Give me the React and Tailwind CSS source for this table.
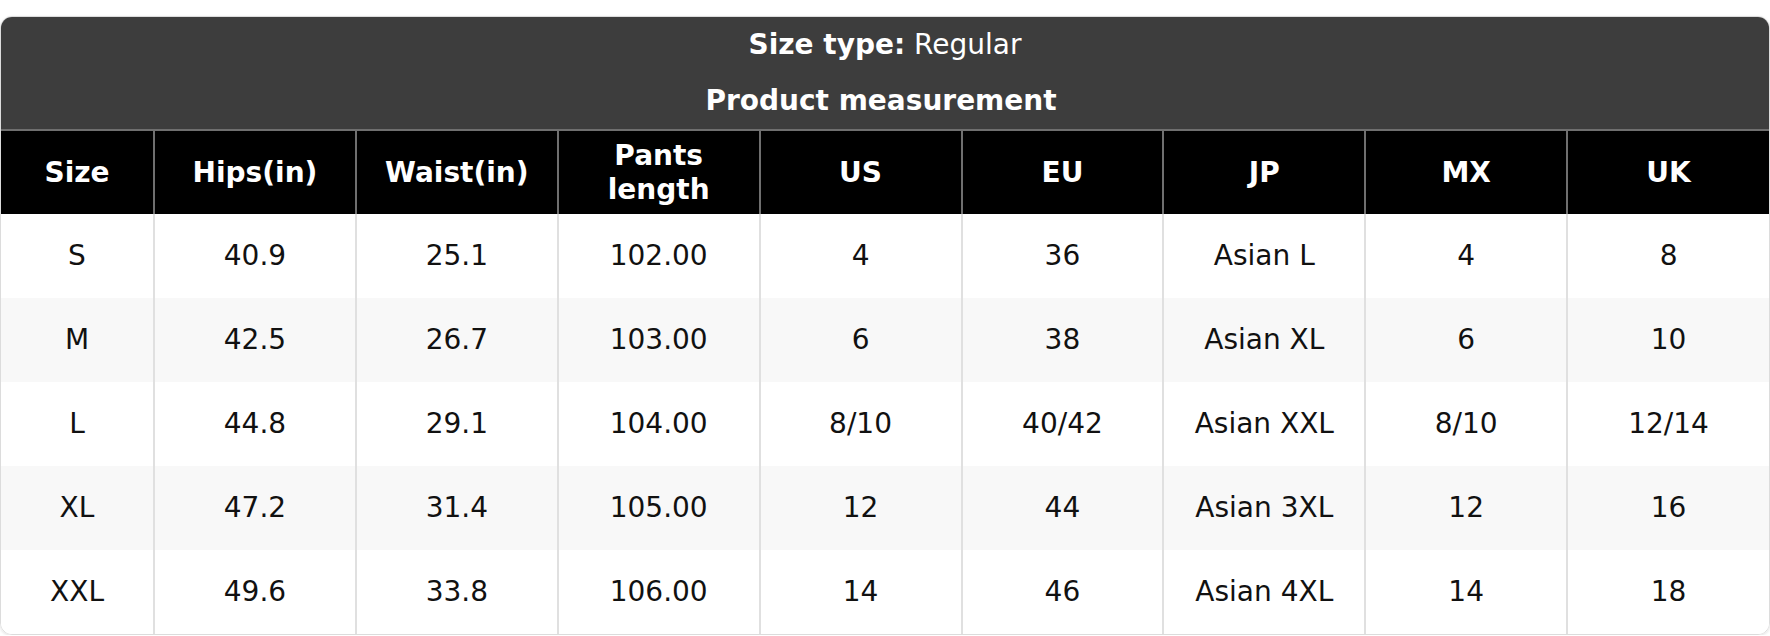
const columns = ['Size', 'Hips(in)', 'Waist(in)', 'Pants length', 'US', 'EU', 'JP', 'MX', 'UK'];

const rows = [
  ['S', '40.9', '25.1', '102.00', '4', '36', 'Asian L', '4', '8'],
  ['M', '42.5', '26.7', '103.00', '6', '38', 'Asian XL', '6', '10'],
  ['L', '44.8', '29.1', '104.00', '8/10', '40/42', 'Asian XXL', '8/10', '12/14'],
  ['XL', '47.2', '31.4', '105.00', '12', '44', 'Asian 3XL', '12', '16'],
  ['XXL', '49.6', '33.8', '106.00', '14', '46', 'Asian 4XL', '14', '18'],
];

const App = () => {
  return (
    <div className="bg-white pt-4 font-['DejaVu_Sans',sans-serif]">
      <div className="overflow-hidden rounded-xl border border-[#dcdcdc] shadow-[0_1px_3px_rgba(0,0,0,0.12)]">
        <div className="bg-[#3d3d3d] text-white text-[28px] leading-[1.2] text-center">
          <div className="h-[56px] flex items-center justify-center">
            <span>
              <span className="font-bold">Size type:</span> Regular
            </span>
          </div>
          <div className="h-[56px] flex items-center justify-center font-bold pr-2">Product measurement</div>
        </div>

        <table className="w-full table-fixed border-collapse text-[28px] leading-[1.2] text-center">
          <colgroup>
            <col className="w-[153px]" />
            {columns.slice(1).map((c) => (
              <col key={c} />
            ))}
          </colgroup>
          <thead>
            <tr className="bg-black text-white border-t-2 border-[#6f6f6f]">
              {columns.map((c, i) => (
                <th
                  key={c}
                  className={`h-[82px] px-2 py-2 font-bold ${i > 0 ? 'border-l-2 border-[#6f6f6f]' : ''}`}
                >
                  {c === 'Pants length' ? (
                    <>
                      Pants
                      <br />
                      length
                    </>
                  ) : (
                    c
                  )}
                </th>
              ))}
            </tr>
          </thead>
          <tbody className="text-[#111]">
            {rows.map((r, ri) => (
              <tr key={r[0]} className={ri % 2 === 1 ? 'bg-[#f8f8f8]' : 'bg-white'}>
                {r.map((v, i) => (
                  <td
                    key={i}
                    className={`h-[84px] px-2 ${i > 0 ? 'border-l-2 border-[#e0e0e0]' : ''}`}
                  >
                    {v}
                  </td>
                ))}
              </tr>
            ))}
          </tbody>
        </table>
      </div>
    </div>
  );
};

export default App;
